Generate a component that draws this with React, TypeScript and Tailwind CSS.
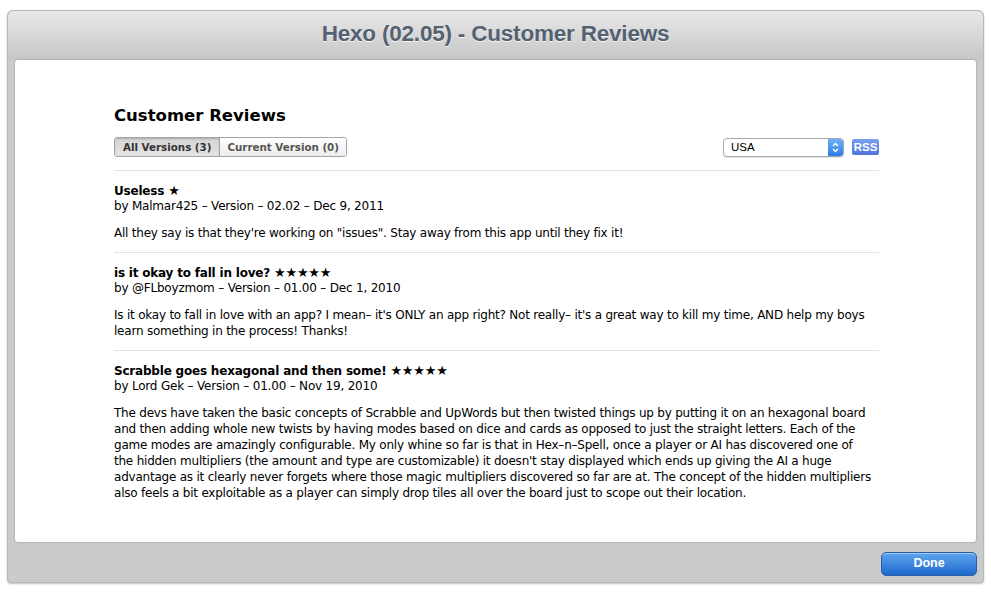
const reviews = [
  {
    title: 'Useless',
    stars: '★',
    by: 'by Malmar425 – Version – 02.02 – Dec 9, 2011',
    lines: ['All they say is that they\'re working on "issues". Stay away from this app until they fix it!'],
  },
  {
    title: 'is it okay to fall in love?',
    stars: '★★★★★',
    by: 'by @FLboyzmom – Version – 01.00 – Dec 1, 2010',
    lines: [
      "Is it okay to fall in love with an app? I mean– it's ONLY an app right? Not really– it's a great way to kill my time, AND help my boys",
      'learn something in the process! Thanks!',
    ],
  },
  {
    title: 'Scrabble goes hexagonal and then some!',
    stars: '★★★★★',
    by: 'by Lord Gek – Version – 01.00 – Nov 19, 2010',
    lines: [
      'The devs have taken the basic concepts of Scrabble and UpWords but then twisted things up by putting it on an hexagonal board',
      'and then adding whole new twists by having modes based on dice and cards as opposed to just the straight letters. Each of the',
      'game modes are amazingly configurable. My only whine so far is that in Hex–n–Spell, once a player or AI has discovered one of',
      "the hidden multipliers (the amount and type are customizable) it doesn't stay displayed which ends up giving the AI a huge",
      'advantage as it clearly never forgets where those magic multipliers discovered so far are at. The concept of the hidden multipliers',
      'also feels a bit exploitable as a player can simply drop tiles all over the board just to scope out their location.',
    ],
  },
];

export default function App() {
  return (
    <div className="w-[991px] h-[592px] bg-white pt-[10px] px-[7px] pb-[9px] font-['DejaVu_Sans',sans-serif]">
      <div className="h-full flex flex-col rounded-t-[6px] rounded-b-[4px] bg-[#cbcbcb] border border-[#b8b8b8] shadow-[0_1px_2px_rgba(0,0,0,0.25)]">
        <div className="h-[49px] rounded-t-[6px] bg-gradient-to-b from-[#e9e9e9] to-[#c6c6c6] flex items-center justify-center pb-[3px]">
          <h1 className="text-[22.5px] font-bold text-[#536170] tracking-[-0.2px] font-['Liberation_Sans',sans-serif] [text-shadow:0_1px_0_rgba(255,255,255,0.8)]">
            Hexo (02.05) - Customer Reviews
          </h1>
        </div>
        <div className="mx-[7px] h-[482px] bg-white rounded-[3px] shadow-[0_0_2px_rgba(0,0,0,0.35)] pl-[99px] pr-[97px] pt-[45px]">
          <h2 className="text-[16.5px] font-bold text-black leading-[22px]">Customer Reviews</h2>
          <div className="mt-[10px] flex items-center justify-between">
            <div className="flex h-[20px] rounded-[3px] border border-[#a5a5a5] overflow-hidden text-[10.3px] font-bold leading-[18px]">
              <div className="px-[8px] bg-gradient-to-b from-[#d4d4d4] to-[#e4e4e4] text-[#333] border-r border-[#a5a5a5] shadow-[inset_0_1px_2px_rgba(0,0,0,0.2)]">
                All Versions (3)
              </div>
              <div className="px-[7px] bg-gradient-to-b from-[#ffffff] to-[#ececec] text-[#555]">
                Current Version (0)
              </div>
            </div>
            <div className="flex items-center gap-[8px]">
              <div className="w-[121px] h-[19px] flex rounded-[4px] border border-[#a8a8a8] overflow-hidden bg-white shadow-[0_1px_1px_rgba(0,0,0,0.1)]">
                <div className="flex-1 pl-[7px] text-[11.5px] leading-[17px] text-black font-['Liberation_Sans',sans-serif]">USA</div>
                <div className="w-[15px] bg-gradient-to-b from-[#6fb1f6] to-[#2a7de9] flex items-center justify-center">
                  <svg width="7" height="11" viewBox="0 0 7 11" fill="none" stroke="white" strokeWidth="1.4">
                    <path d="M1 4 L3.5 1.5 L6 4" />
                    <path d="M1 7 L3.5 9.5 L6 7" />
                  </svg>
                </div>
              </div>
              <div className="w-[27px] h-[16px] rounded-[2px] bg-gradient-to-b from-[#7c9ef0] to-[#4d74dc] text-white text-[11.5px] font-bold leading-[16px] text-center font-['Liberation_Sans',sans-serif]">
                RSS
              </div>
            </div>
          </div>
          <div className="mt-[13px]">
            {reviews.map((r, i) => (
              <div key={i} className="border-t border-[#e3e3e3] pt-[12px] pb-[11px]">
                <div className="text-[12px] font-bold text-black leading-[15px] tracking-[-0.2px]">
                  {r.title} <span className="font-normal text-[13px]">{r.stars}</span>
                </div>
                <div className="text-[12px] text-black leading-[15px] tracking-[-0.2px]">{r.by}</div>
                <div className="mt-[11px] text-[12px] text-black leading-[16px] tracking-[-0.22px] whitespace-nowrap">
                  {r.lines.map((l, j) => (
                    <div key={j}>{l}</div>
                  ))}
                </div>
              </div>
            ))}
          </div>
        </div>
        <div className="flex-1 flex items-center justify-end pr-[6px] pt-[3px]">
          <button className="w-[96px] h-[24px] rounded-[5px] border border-[#2a5fa8] bg-gradient-to-b from-[#5ea6ef] to-[#1d68cc] text-white text-[12.5px] font-bold font-['Liberation_Sans',sans-serif] shadow-[inset_0_1px_0_rgba(255,255,255,0.4)]">
            Done
          </button>
        </div>
      </div>
    </div>
  );
}
